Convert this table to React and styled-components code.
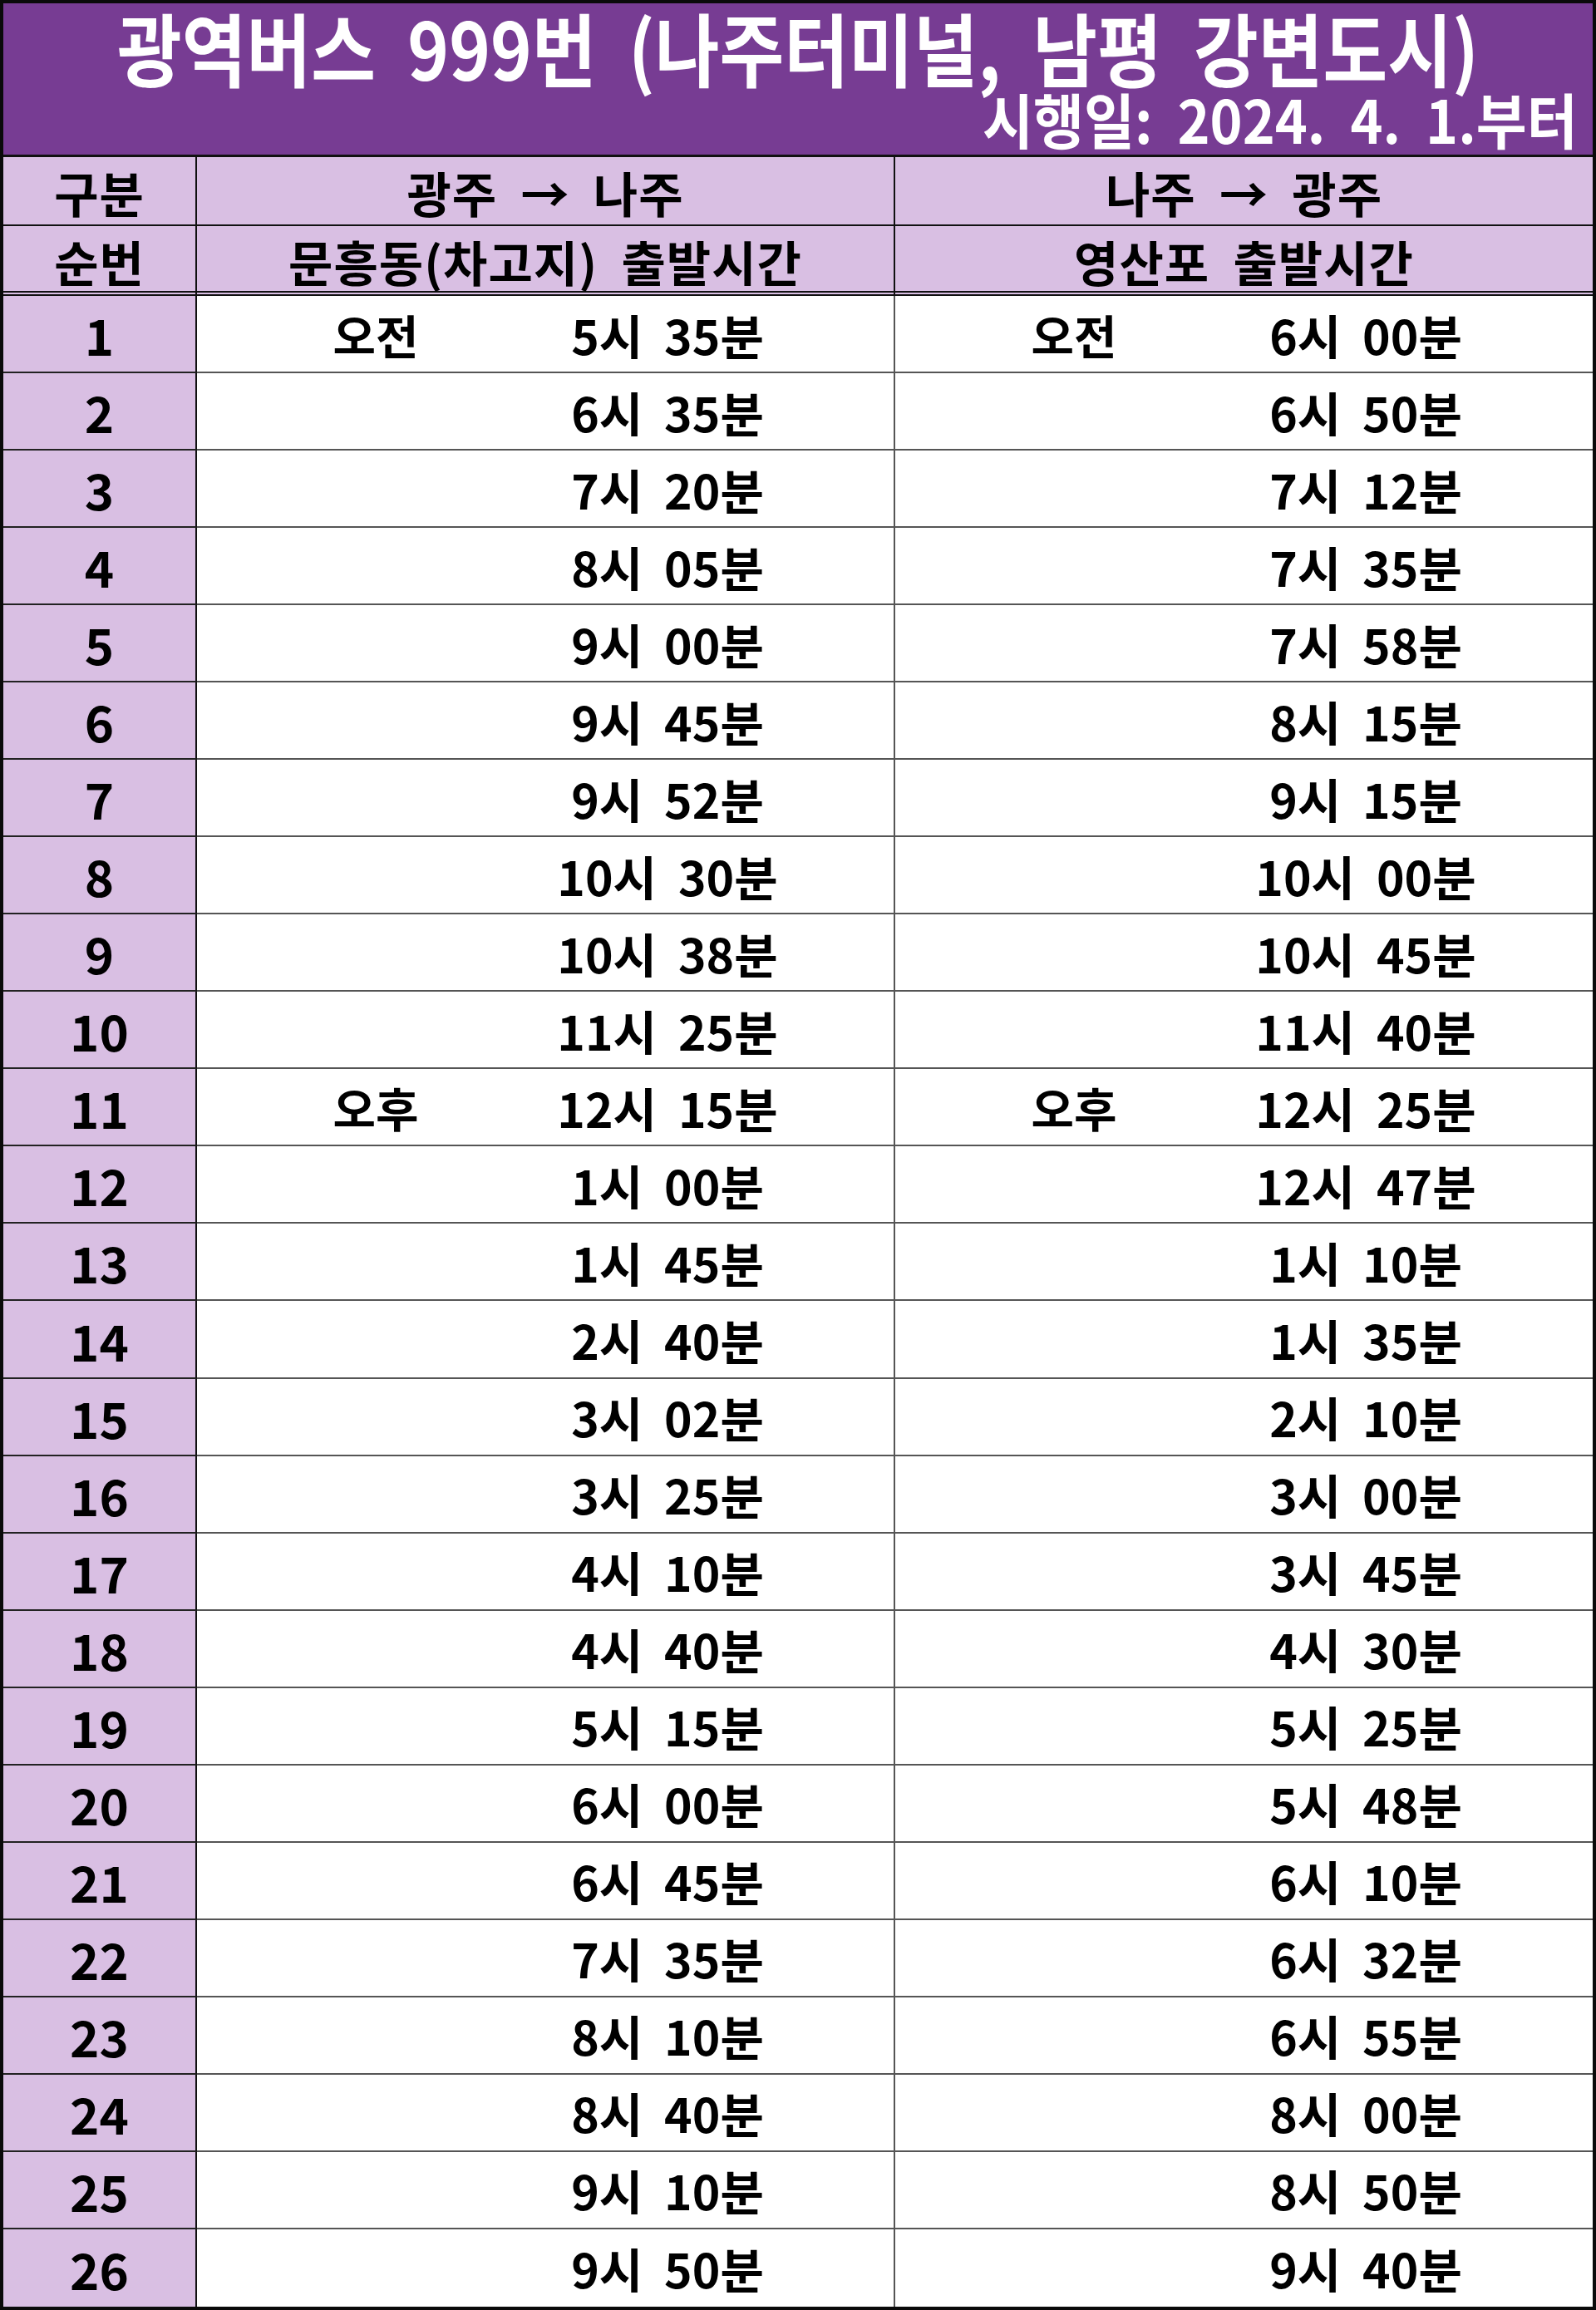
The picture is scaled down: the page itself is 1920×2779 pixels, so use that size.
import React from "react";
import styled, { createGlobalStyle } from "styled-components";

const FONT = `"Noto Sans CJK KR", sans-serif`;

const GlobalStyle = createGlobalStyle`
  html, body {
    margin: 0;
    padding: 0;
    background: #fff;
  }
  * {
    box-sizing: border-box;
  }
`;

const outbound = [
  ["오전", "5", "35"], ["", "6", "35"], ["", "7", "20"], ["", "8", "05"],
  ["", "9", "00"], ["", "9", "45"], ["", "9", "52"], ["", "10", "30"],
  ["", "10", "38"], ["", "11", "25"], ["오후", "12", "15"], ["", "1", "00"],
  ["", "1", "45"], ["", "2", "40"], ["", "3", "02"], ["", "3", "25"],
  ["", "4", "10"], ["", "4", "40"], ["", "5", "15"], ["", "6", "00"],
  ["", "6", "45"], ["", "7", "35"], ["", "8", "10"], ["", "8", "40"],
  ["", "9", "10"], ["", "9", "50"],
];

const inbound = [
  ["오전", "6", "00"], ["", "6", "50"], ["", "7", "12"], ["", "7", "35"],
  ["", "7", "58"], ["", "8", "15"], ["", "9", "15"], ["", "10", "00"],
  ["", "10", "45"], ["", "11", "40"], ["오후", "12", "25"], ["", "12", "47"],
  ["", "1", "10"], ["", "1", "35"], ["", "2", "10"], ["", "3", "00"],
  ["", "3", "45"], ["", "4", "30"], ["", "5", "25"], ["", "5", "48"],
  ["", "6", "10"], ["", "6", "32"], ["", "6", "55"], ["", "8", "00"],
  ["", "8", "50"], ["", "9", "40"],
];

const Sheet = styled.div`
  width: 1920px;
  height: 2779px;
  border: 4px solid #0a0a0a;
  display: flex;
  flex-direction: column;
  font-family: ${FONT};
  color: #000;
  background: #fff;
`;

const TitleBar = styled.header`
  flex: none;
  height: 185px;
  padding-top: 4px;
  background: #773c93;
  border-bottom: 3px solid #111;
  color: #fff;
  display: flex;
  flex-direction: column;
`;

/* the sign uses a narrow headline face, so squeeze the line a bit */
const Title = styled.h1`
  margin: 0;
  font-size: 96px;
  font-weight: 700;
  line-height: 1;
  text-align: center;
  white-space: pre;
  transform: scaleX(0.88);
`;

const Effective = styled.div`
  margin-top: 2px;
  padding-right: 20px;
  font-size: 72px;
  font-weight: 700;
  line-height: 1;
  text-align: right;
  white-space: pre;
  transform: scaleX(0.92);
  transform-origin: right center;
`;

const HeadRow = styled.div`
  flex: none;
  display: grid;
  grid-template-columns: 233px 840px 1fr;
  height: ${(p) => p.$height}px;
  background: #d9bfe3;
  border-bottom: ${(p) => (p.$double ? "6px double #111" : "2px solid #111")};
`;

const HeadCell = styled.div`
  display: flex;
  align-items: center;
  justify-content: center;
  font-size: 58px;
  font-weight: 700;
  letter-spacing: 1px;
  white-space: pre;
  border-right: ${(p) => (p.$last ? "none" : "2px solid #111")};
`;

const Body = styled.div`
  flex: 1;
  display: grid;
  grid-template-rows: repeat(26, 1fr);
`;

const Row = styled.div`
  display: grid;
  grid-template-columns: 233px 840px 1fr;
`;

const NoCell = styled.div`
  display: flex;
  align-items: center;
  justify-content: center;
  background: #d9bfe3;
  font-size: 60px;
  font-weight: 700;
  border-right: 2px solid #111;
  border-bottom: ${(p) => (p.$last ? "none" : "2px solid #222")};
`;

const TimeCell = styled.div`
  display: grid;
  grid-template-columns: 430px 272px 1fr;
  align-items: center;
  border-right: ${(p) => (p.$divider ? "2px solid #555" : "none")};
  border-bottom: ${(p) => (p.$last ? "none" : "2px solid #555")};
`;

const Period = styled.span`
  text-align: center;
  font-size: 56px;
  font-weight: 700;
`;

const Clock = styled.span`
  text-align: center;
  font-size: 57px;
  font-weight: 700;
  white-space: pre;
`;

const Slot = ({ entry, divider, last }) => {
  const [period, h, m] = entry;
  return (
    <TimeCell $divider={divider} $last={last}>
      <Period>{period}</Period>
      <Clock>{`${h}시  ${m}분`}</Clock>
    </TimeCell>
  );
};

export default function App() {
  return (
    <>
      <GlobalStyle />
      <Sheet>
        <TitleBar>
          <Title>{"광역버스  999번  (나주터미널,  남평  강변도시)"}</Title>
          <Effective>{"시행일:  2024.  4.  1.부터"}</Effective>
        </TitleBar>
        <HeadRow $height={83}>
          <HeadCell>구분</HeadCell>
          <HeadCell>{"광주  →  나주"}</HeadCell>
          <HeadCell $last>{"나주  →  광주"}</HeadCell>
        </HeadRow>
        <HeadRow $height={84} $double>
          <HeadCell>순번</HeadCell>
          <HeadCell>{"문흥동(차고지)  출발시간"}</HeadCell>
          <HeadCell $last>{"영산포  출발시간"}</HeadCell>
        </HeadRow>
        <Body>
          {outbound.map((entry, i) => {
            const last = i === outbound.length - 1;
            return (
              <Row key={i}>
                <NoCell $last={last}>{i + 1}</NoCell>
                <Slot entry={entry} divider last={last} />
                <Slot entry={inbound[i]} last={last} />
              </Row>
            );
          })}
        </Body>
      </Sheet>
    </>
  );
}
